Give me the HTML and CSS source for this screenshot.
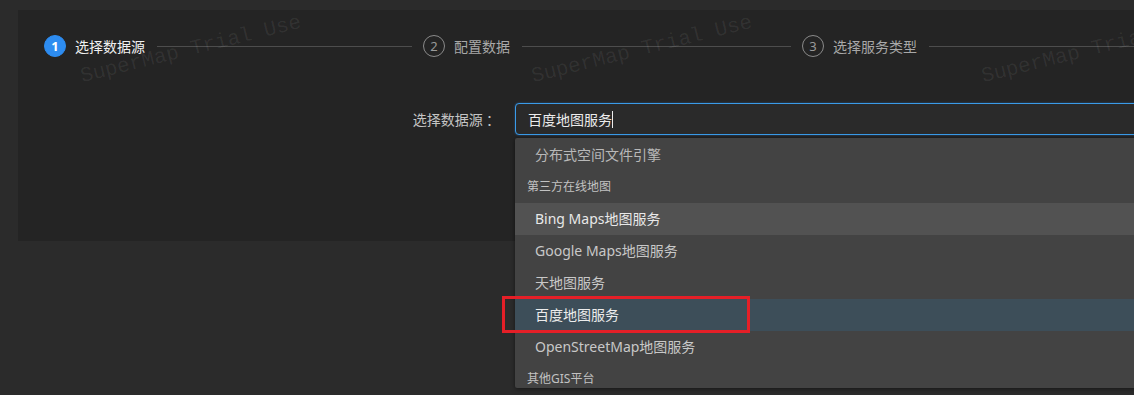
FILE: index.html
```html
<!DOCTYPE html>
<html>
  <head>
    <title>发布服务</title>
    <link rel="stylesheet" href="styles.css">
  </head>
  <body>
    <div class="page">
      <div class="panel">
        <div class="steps">
          <div class="step step-active">
            <span class="step-num">1</span>
            <span class="step-title">选择数据源</span>
            <span class="step-line"></span>
          </div>
          <div class="step">
            <span class="step-num">2</span>
            <span class="step-title">配置数据</span>
            <span class="step-line"></span>
          </div>
          <div class="step">
            <span class="step-num">3</span>
            <span class="step-title">选择服务类型</span>
            <span class="step-line"></span>
          </div>
        </div>

        <div class="form-row">
          <label class="form-label">选择数据源 ：</label>
          <div class="select-wrap">
            <div class="select-input">百度地图服务<span class="caret"></span></div>
            <div class="dropdown">
              <div class="option">分布式空间文件引擎</div>
              <div class="group-title">第三方在线地图</div>
              <div class="option option-hover">Bing Maps地图服务</div>
              <div class="option">Google Maps地图服务</div>
              <div class="option">天地图服务</div>
              <div class="option option-selected">百度地图服务</div>
              <div class="option">OpenStreetMap地图服务</div>
              <div class="group-title">其他GIS平台</div>
            </div>
          </div>
        </div>
      </div>

      <div class="watermarks">
        <span class="wm wm-1">SuperMap Trial Use</span>
        <span class="wm wm-2">SuperMap Trial Use</span>
        <span class="wm wm-3">SuperMap Trial Use</span>
      </div>

      <div class="highlight"></div>
    </div>
  </body>
</html>
```

FILE: styles.css
```css
body{
  margin: 0;
  background-color: #2b2b2b;
  font-family: "Noto Sans", "Noto Sans CJK SC", sans-serif;
  font-size: 14px;
  overflow: hidden;
}

.page{
  position: relative;
  height: 395px;
  padding: 10px 0 0 18px;
  box-sizing: border-box;
}

.panel{
  width: 1200px;
  height: 231px;
  background-color: #242424;
  padding: 25px 0 0 26px;
  box-sizing: border-box;
}

/* steps */
.steps{
  display: flex;
}
.step{
  flex: none;
  width: 379px;
  display: flex;
  align-items: center;
}
.step-num{
  width: 20px;
  height: 20px;
  border: 1px solid #8a8a8a;
  border-radius: 50%;
  color: #9a9a9a;
  font-size: 13px;
  line-height: 20px;
  text-align: center;
  flex: none;
}
.step-title{
  margin-left: 9px;
  color: #a8a8a8;
  font-family: "Noto Sans CJK SC", sans-serif;
  font-size: 14px;
  line-height: 22px;
  white-space: nowrap;
}
.step-line{
  flex: 1;
  height: 1px;
  background-color: #4d4d4d;
  margin: 0 11px 0 12px;
}
.step-active .step-num{
  background-color: #2d8cf0;
  border-color: #2d8cf0;
  color: #fff;
  font-weight: bold;
}
.step-active .step-title{
  color: #f0f0f0;
}

/* form */
.form-row{
  display: flex;
  align-items: center;
  margin-top: 46px;
}
.form-label{
  width: 471px;
  padding-right: 15px;
  box-sizing: border-box;
  text-align: right;
  color: #c4c4c4;
  font-family: "Noto Sans CJK SC", sans-serif;
  white-space: nowrap;
}
.select-wrap{
  position: relative;
  width: 700px;
}
.select-input{
  height: 32px;
  box-sizing: border-box;
  border: 1px solid #3a9be8;
  border-radius: 4px;
  background-color: #2a2a2a;
  box-shadow: 0 0 2px rgba(45, 140, 240, 0.5);
  padding-left: 12px;
  color: #ececec;
  font-family: "Noto Sans CJK SC", sans-serif;
  line-height: 30px;
}
.caret{
  display: inline-block;
  width: 1px;
  height: 17px;
  background-color: #ececec;
  vertical-align: -3px;
}

.dropdown{
  position: absolute;
  top: 35px;
  left: 0;
  right: 0;
  height: 250px;
  overflow: hidden;
  background-color: #434343;
  box-shadow: 0 1px 4px rgba(0, 0, 0, 0.5);
  border-radius: 2px;
  z-index: 2;
}
.option{
  height: 32px;
  line-height: 32px;
  padding-left: 20px;
  color: #c8c8c8;
  font-family: "Noto Sans", "Noto Sans CJK SC", sans-serif;
  white-space: nowrap;
}
.option:first-child{
  margin-top: 1px;
  color: #b8b8b8;
}
.group-title{
  height: 32px;
  line-height: 32px;
  padding-left: 12px;
  font-size: 12px;
  color: #c2c2c2;
  font-family: "Noto Sans", "Noto Sans CJK SC", sans-serif;
}
.option-hover{
  background-color: #525252;
  color: #e8e8e8;
}
.option-selected{
  background-color: #3d4e59;
  color: #ececec;
}

/* watermark overlay */
.watermarks{
  position: absolute;
  top: 0;
  left: 0;
  right: 0;
  height: 100px;
  pointer-events: none;
}
.wm{
  position: absolute;
  top: 38px;
  width: 230px;
  text-align: center;
  font-family: "Liberation Mono", monospace;
  font-size: 21px;
  line-height: 24px;
  color: rgba(255, 255, 255, 0.07);
  transform: rotate(-14deg);
  white-space: nowrap;
}
.wm-1{ left: 76px; }
.wm-2{ left: 527px; }
.wm-3{ left: 977px; }

/* annotation box */
.highlight{
  position: absolute;
  left: 502px;
  top: 296px;
  width: 248px;
  height: 37px;
  border: 3px solid #e51f27;
  box-sizing: border-box;
  z-index: 3;
}
```
